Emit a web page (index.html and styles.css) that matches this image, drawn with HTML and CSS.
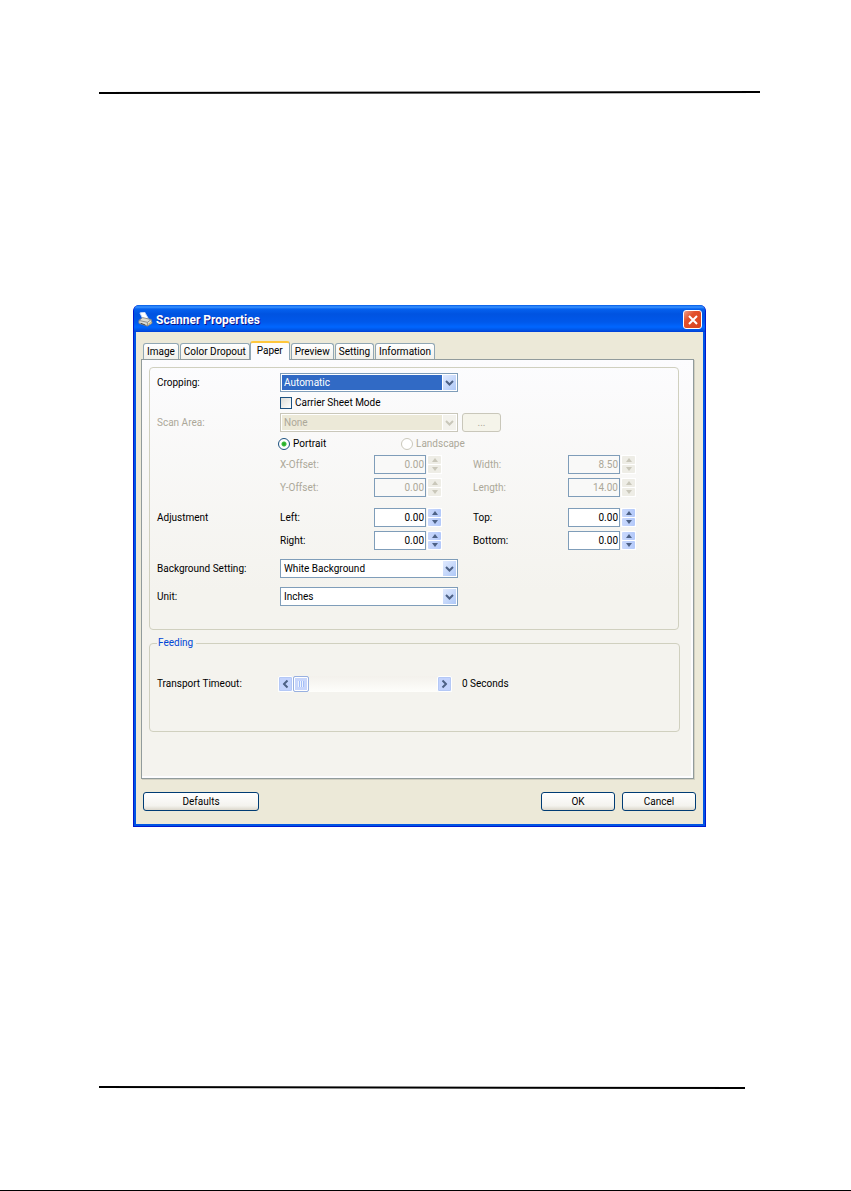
FILE: index.html
```html
<!DOCTYPE html>
<html lang="en">
    <head>
        <meta charset="UTF-8">
        <meta name="viewport" content="width=device-width, initial-scale=1.0">
        <title>Scanner Properties</title>
        <link rel="stylesheet" href="styles.css">
    </head>
    <body>
        <!-- shared arrow shapes -->
        <svg class="symbols" aria-hidden="true">
            <symbol id="chevron" viewBox="0 0 9 6"><path d="M1 1l3.500 3.500L8 1" fill="none" stroke="currentColor" stroke-width="2"/></symbol>
            <symbol id="up" viewBox="0 0 6 4"><path d="M0 4L3 0L6 4z" fill="currentColor"/></symbol>
            <symbol id="down" viewBox="0 0 6 4"><path d="M0 0L3 4L6 0z" fill="currentColor"/></symbol>
        </svg>
        <div class="page">
            <svg class="rule" viewBox="0 0 661 3" preserveAspectRatio="none"><path d="M0 2L661 1" stroke="#000" stroke-width="2"/></svg>
            <div class="window">
                <div class="titlebar">
                    <svg class="app-icon" viewBox="0 0 16 16">
                        <path d="M2 1l5-1l4 7l-5 2z" fill="#fff" stroke="#c4d6f6"/>
                        <path d="M1 9l4-3l9 2l1 4l-5 3l-9-3z" fill="#dcdcd4" stroke="#8a8a88"/>
                        <path d="M1 9l9 2l4-3M10 11v4" fill="none" stroke="#8a8a88"/>
                        <path d="M3 12l5 2" stroke="#444"/>
                        <path d="M11 13l3-2" stroke="#d8b040"/>
                    </svg>
                    <h1>Scanner Properties</h1>
                    <button class="close" aria-label="Close">
                        <svg viewBox="0 0 10 10"><path d="M1 1l8 8M9 1l-8 8" stroke="#fff" stroke-width="2"/></svg>
                    </button>
                </div>
                <div class="client">
                    <div class="tabs" role="tablist">
                        <button class="tab" role="tab">Image</button>
                        <button class="tab" role="tab">Color Dropout</button>
                        <button class="tab active" role="tab" aria-selected="true">Paper</button>
                        <button class="tab" role="tab">Preview</button>
                        <button class="tab" role="tab">Setting</button>
                        <button class="tab" role="tab">Information</button>
                    </div>
                    <div class="panel">
                        <div class="group">
                            <div class="row">
                                <label for="cropping">Cropping:</label>
                                <div class="combo selected">
                                    <select id="cropping"><option>Automatic</option></select>
                                    <span class="drop"><svg><use href="#chevron"/></svg></span>
                                </div>
                            </div>
                            <div class="row short">
                                <label class="check"><input type="checkbox">Carrier Sheet Mode</label>
                            </div>
                            <div class="row off">
                                <label for="area">Scan Area:</label>
                                <div class="combo">
                                    <select id="area" disabled><option>None</option></select>
                                    <span class="drop"><svg><use href="#chevron"/></svg></span>
                                </div>
                                <button class="btn more" disabled>...</button>
                            </div>
                            <div class="row radios">
                                <label class="check"><input type="radio" name="orient" checked>Portrait</label>
                                <label class="check land off"><input type="radio" name="orient" disabled>Landscape</label>
                            </div>
                            <div class="row off">
                                <label class="field" for="xoff">X-Offset:</label>
                                <div class="spin"><input id="xoff" type="text" value="0.00" disabled><div class="arrows"><button disabled aria-label="Up"><svg><use href="#up"/></svg></button><button disabled aria-label="Down"><svg><use href="#down"/></svg></button></div></div>
                                <label for="width">Width:</label>
                                <div class="spin"><input id="width" type="text" value="8.50" disabled><div class="arrows"><button disabled aria-label="Up"><svg><use href="#up"/></svg></button><button disabled aria-label="Down"><svg><use href="#down"/></svg></button></div></div>
                            </div>
                            <div class="row off">
                                <label class="field" for="yoff">Y-Offset:</label>
                                <div class="spin"><input id="yoff" type="text" value="0.00" disabled><div class="arrows"><button disabled aria-label="Up"><svg><use href="#up"/></svg></button><button disabled aria-label="Down"><svg><use href="#down"/></svg></button></div></div>
                                <label for="length">Length:</label>
                                <div class="spin"><input id="length" type="text" value="14.00" disabled><div class="arrows"><button disabled aria-label="Up"><svg><use href="#up"/></svg></button><button disabled aria-label="Down"><svg><use href="#down"/></svg></button></div></div>
                            </div>
                            <div class="row apart">
                                <span>Adjustment</span>
                                <label for="left">Left:</label>
                                <div class="spin"><input id="left" type="text" value="0.00"><div class="arrows"><button aria-label="Up"><svg><use href="#up"/></svg></button><button aria-label="Down"><svg><use href="#down"/></svg></button></div></div>
                                <label for="top">Top:</label>
                                <div class="spin"><input id="top" type="text" value="0.00"><div class="arrows"><button aria-label="Up"><svg><use href="#up"/></svg></button><button aria-label="Down"><svg><use href="#down"/></svg></button></div></div>
                            </div>
                            <div class="row">
                                <label class="field" for="right">Right:</label>
                                <div class="spin"><input id="right" type="text" value="0.00"><div class="arrows"><button aria-label="Up"><svg><use href="#up"/></svg></button><button aria-label="Down"><svg><use href="#down"/></svg></button></div></div>
                                <label for="bottom">Bottom:</label>
                                <div class="spin"><input id="bottom" type="text" value="0.00"><div class="arrows"><button aria-label="Up"><svg><use href="#up"/></svg></button><button aria-label="Down"><svg><use href="#down"/></svg></button></div></div>
                            </div>
                            <div class="row loose">
                                <label for="background">Background Setting:</label>
                                <div class="combo">
                                    <select id="background"><option>White Background</option></select>
                                    <span class="drop"><svg><use href="#chevron"/></svg></span>
                                </div>
                            </div>
                            <div class="row loose">
                                <label for="unit">Unit:</label>
                                <div class="combo">
                                    <select id="unit"><option>Inches</option></select>
                                    <span class="drop"><svg><use href="#chevron"/></svg></span>
                                </div>
                            </div>
                        </div>
                        <fieldset class="group feeding">
                            <legend>Feeding</legend>
                            <div class="row">
                                <label for="timeout">Transport Timeout:</label>
                                <div class="scroll">
                                    <button class="prev" aria-label="Less"><svg><use href="#chevron"/></svg></button>
                                    <input id="timeout" type="range" min="0" max="30" value="0">
                                    <button class="next" aria-label="More"><svg><use href="#chevron"/></svg></button>
                                </div>
                                <output for="timeout">0 Seconds</output>
                            </div>
                        </fieldset>
                    </div>
                    <div class="buttons">
                        <button class="btn wide">Defaults</button>
                        <button class="btn">OK</button>
                        <button class="btn">Cancel</button>
                    </div>
                </div>
            </div>
            <svg class="rule bottom" viewBox="0 0 646 3" preserveAspectRatio="none"><path d="M0 1L646 2" stroke="#000" stroke-width="2"/></svg>
        </div>
    </body>
</html>
```
FILE: styles.css
```css
*{
    box-sizing: border-box;
}
body{
    margin: 0;
    background: #fff;
    color: #000;
    font-family: Roboto, "Liberation Sans", sans-serif;
    font-size: 10px;
    line-height: 12px;
}
button, input, select{
    font: inherit;
    color: inherit;
    margin: 0;
    padding: 0;
}
svg{
    display: block;
}
.symbols{
    position: absolute;
    width: 0;
    height: 0;
}
.page{
    min-height: 100vh;
    padding: 91px 91px 0 99px;
    border-bottom: 1px solid #000;
}
.rule{
    width: 100%;
    height: 3px;
}
.rule.bottom{
    width: calc(100% - 15px);
    margin-top: 259px;
}
.window{
    margin: 211px 54px 0 34px;
    border: 1px solid #0019cf;
    border-top: 0;
    border-radius: 6px 6px 0 0;
    background: #0054e3;
    overflow: hidden;
}
.titlebar{
    display: flex;
    align-items: center;
    height: 27px;
    padding: 2px 3px 0 4px;
    background: linear-gradient(#0058e6 0, #3a93ff 2px, #0561ee 4px, #0053e1 9px, #0058ea 17px, #0066ff 22px, #0054e5 25px, #003dd7 27px);
}
.titlebar h1{
    flex: 1;
    margin: 0 0 0 3px;
    color: #fff;
    font-size: 12px;
    line-height: 16px;
    text-shadow: 1px 1px #0f1089;
}
.app-icon{
    width: 15px;
    height: 15px;
}
.close{
    display: grid;
    place-items: center;
    width: 19px;
    height: 19px;
    border: 1px solid #fff;
    border-radius: 3px;
    background: linear-gradient(135deg, #f0a088, #e2512c 35%, #d8421c);
}
.close svg{
    width: 10px;
    height: 10px;
}
.client{
    margin: 0 2px 2px;
    padding: 9px 9px 13px 5px;
    background: #ece9d8;
}
.tabs{
    display: flex;
    align-items: flex-end;
    gap: 1px;
    padding-left: 2px;
}
.tab{
    height: 16px;
    padding: 0 3px;
    border: 1px solid #91a7b4;
    border-bottom: 0;
    border-radius: 3px 3px 0 0;
    background: linear-gradient(#fff, #f1f0ea);
}
.tab.active{
    height: 19px;
    padding: 0 6px 2px;
    margin: 0 0 -1px -1px;
    border-top: 2px solid #ffc73c;
    background: #fcfcfe;
    position: relative;
}
.panel{
    padding: 7px 14px 46px 7px;
    border: 1px solid #919b9c;
    box-shadow: inset -2px -2px #fcfcfe, 1px 1px #d0cebf;
    background: linear-gradient(#fcfcfe, #f4f3ee 55%, #f4f3ee);
}
.group{
    display: flex;
    flex-direction: column;
    gap: 4px;
    margin: 0;
    padding: 5px 7px 23px;
    border: 1px solid #d0d0bf;
    border-radius: 4px;
}
.row{
    display: grid;
    grid-template-columns: 123px 94px 99px 95px 1fr;
    align-items: center;
    height: 19px;
}
.row.short{
    height: 13px;
}
.row.radios{
    height: 15px;
}
.row.apart{
    margin-top: 7px;
}
.row.loose{
    margin-top: 5px;
}
.off{
    color: #aca899;
}
.field{
    grid-column: 2;
}
.combo{
    grid-column: 2 / 4;
    position: relative;
    width: 178px;
    height: 19px;
    color: #000;
}
.combo select{
    appearance: none;
    width: 100%;
    height: 100%;
    padding: 0 20px 0 3px;
    border: 1px solid #7f9db9;
    border-radius: 0;
    background: #fff;
    opacity: 1;
}
.combo.selected select{
    color: #fff;
    background: #316ac5;
    box-shadow: inset 0 0 0 1px #fff;
}
.drop{
    position: absolute;
    top: 1px;
    right: 1px;
    display: grid;
    place-items: center;
    width: 15px;
    height: 17px;
    border: 1px solid #fff;
    background: linear-gradient(135deg, #e1eafe, #aec8f7);
    color: #4d6185;
    pointer-events: none;
}
.drop svg{
    width: 9px;
    height: 6px;
}
.off .combo select{
    color: #aca899;
    border-color: #c9c7ba;
    background: #ece9d8;
    box-shadow: inset 0 0 0 1px #fff;
}
.off .drop{
    color: #c9c7ba;
    background: #f3f2ec;
}
.check{
    grid-column: 2 / 4;
    display: flex;
    align-items: center;
    gap: 3px;
}
.check input{
    appearance: none;
    width: 12px;
    height: 12px;
    border: 1px solid #1c5180;
    background: linear-gradient(135deg, #dcdcd7, #fff);
}
.radios{
    margin-left: -2px;
}
.radios .check{
    grid-column: 2;
}
.radios .land{
    grid-column: 3 / 6;
    margin-left: 29px;
}
.check input[type=radio]{
    border-radius: 50%;
}
.check input[type=radio]:checked{
    background: radial-gradient(#21a121 0, #3cc03c 2px, #fff 3px);
}
.check input:disabled{
    border-color: #cac8bb;
    background: #fff;
}
.spin{
    display: flex;
    gap: 1px;
    height: 19px;
}
.spin input{
    width: 52px;
    padding-right: 1px;
    border: 1px solid #7f9db9;
    background: #fff;
    text-align: right;
}
.spin input:disabled{
    background: #f9f9f8;
}
.arrows{
    display: flex;
    flex-direction: column;
    gap: 1px;
    width: 15px;
    padding: 1px;
    background: #fff;
}
.arrows button{
    display: grid;
    place-items: center;
    flex: 1;
    border: 0;
    border-radius: 1px;
    background: linear-gradient(90deg, #cad9fc, #b3c9fa);
    color: #4d6185;
}
.arrows button:disabled{
    background: #eeede6;
    color: #c9c7ba;
}
.arrows svg{
    width: 6px;
    height: 4px;
}
.btn{
    width: 74px;
    height: 19px;
    border: 1px solid #003c74;
    border-radius: 3px;
    background: linear-gradient(#fff, #f4f3ee 75%, #dcd8cc);
}
.btn.more{
    grid-column: 4;
    width: 39px;
    margin-left: -11px;
    border-color: #c9c7ba;
    background: #f5f4ea;
    color: #aca899;
}
.feeding{
    margin: 7px -1px 0 0;
    padding: 25px 7px 38px;
}
.feeding legend{
    height: 12px;
    padding: 0 3px 0 1px;
    color: #0046d5;
}
.scroll{
    grid-column: 2 / 4;
    display: flex;
    width: 174px;
    height: 16px;
    margin-left: -2px;
    background: linear-gradient(#f3f1ec, #fefefb);
}
.scroll button{
    display: grid;
    place-items: center;
    width: 15px;
    height: 16px;
    border: 1px solid #fff;
    border-radius: 2px;
    background: #c3d3fd;
    box-shadow: inset 0 0 0 1px #b4c8f6;
    color: #4d6185;
}
.scroll svg{
    width: 9px;
    height: 6px;
}
.prev svg{
    transform: rotate(90deg);
}
.next svg{
    transform: rotate(-90deg);
}
.scroll input{
    appearance: none;
    flex: 1;
    min-width: 0;
    height: 16px;
    background: none;
}
.scroll input::-webkit-slider-thumb{
    appearance: none;
    width: 16px;
    height: 16px;
    border: 1px solid #98b0e0;
    border-radius: 2px;
    background: repeating-linear-gradient(90deg, #eef4fe 0, #eef4fe 1px, #a4bff8 1px, #a4bff8 2px) 4px 4px / 6px 6px no-repeat, #c8d6fb;
    box-shadow: inset 0 0 0 1px #fff;
}
.row output{
    grid-column: 4 / 6;
    margin-left: -11px;
}
.buttons{
    display: flex;
    gap: 7px;
    margin: 13px -2px 0 2px;
}
.btn.wide{
    width: 116px;
    margin-right: auto;
}
```
